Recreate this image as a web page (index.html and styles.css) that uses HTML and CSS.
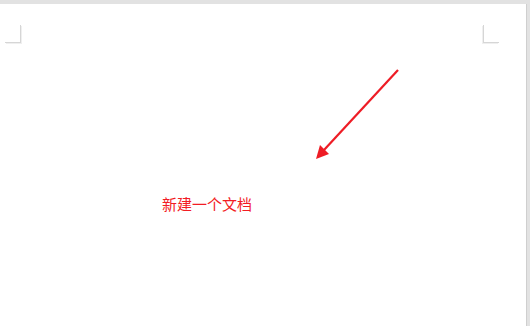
FILE: index.html
```html
<!DOCTYPE html>
<html lang="zh-CN">
<head>
    <meta charset="UTF-8">
    <meta name="viewport" content="width=device-width, initial-scale=1.0">
    <title>新建一个文档</title>
    <link rel="stylesheet" href="styles.css">
</head>
<body>
    <div class="page">
        <span class="corner corner-left"></span>
        <span class="corner corner-right"></span>

        <svg class="arrow" width="530" height="326" viewBox="0 0 530 326">
            <line x1="398" y1="70" x2="324" y2="150" stroke="#ee1c25" stroke-width="2.2" />
            <polygon points="316,159 320,145 329,154" fill="#ee1c25" />
        </svg>

        <p class="note">新建一个文档</p>
    </div>
</body>
</html>
```

FILE: styles.css
```css
html, body {
    margin: 0;
    padding: 0;
    height: 100%;
}

body {
    background-color: #e2e2e2;
    font-family: "Microsoft YaHei", "Noto Sans CJK SC", "Noto Sans", sans-serif;
    overflow: hidden;
}

.page {
    position: relative;
    margin-top: 4px;
    width: 526px;
    height: 322px;
    background-color: #ffffff;
    border-right: 1px solid #cfcfcf;
}

/* page corner marks */
.corner {
    position: absolute;
    top: 21px;
    width: 15px;
    height: 17px;
    border-bottom: 1px solid #d6d6d6;
}

.corner-left {
    left: 5px;
    border-right: 1px solid #d6d6d6;
    box-shadow: 1px 1px 0 #efefef;
}

.corner-right {
    left: 483px;
    border-left: 1px solid #d6d6d6;
    box-shadow: -1px 1px 0 #efefef;
}

.arrow {
    position: absolute;
    top: -4px;
    left: 0;
}

.note {
    margin: 0;
    padding: 189px 0 0 162px;
    font-size: 15px;
    line-height: 22px;
    color: #f21c24;
}
```
